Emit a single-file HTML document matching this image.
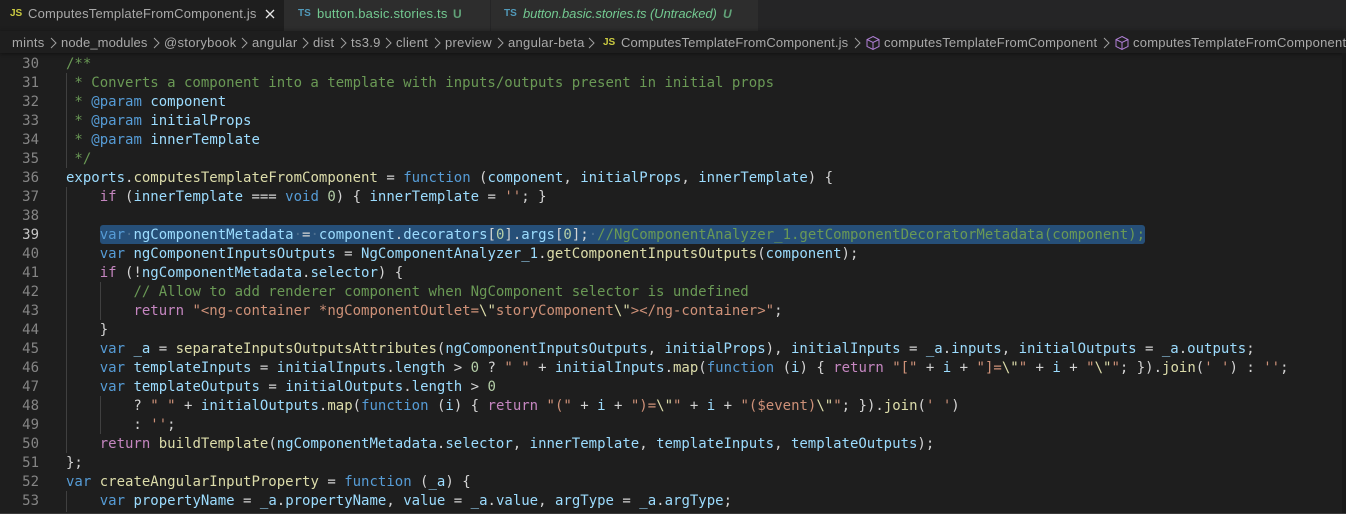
<!DOCTYPE html>
<html><head><meta charset="utf-8">
<style>
html,body{margin:0;padding:0;width:1346px;height:514px;overflow:hidden;background:#1e1e1e}
#root{position:relative;width:1346px;height:514px;overflow:hidden;background:#1e1e1e}
.abs{position:absolute;white-space:pre}
.ui{font-family:"Liberation Sans","DejaVu Sans",sans-serif;font-size:13px;line-height:18px}
.tab{position:absolute;top:0;height:31px;background:#2d2d2d}
.code{position:absolute;left:0;top:1px;width:1346px;font-family:"DejaVu Sans Mono",monospace;font-size:14px;line-height:19px;color:#d4d4d4;font-variant-ligatures:none}
.ln{position:absolute;left:0;width:39px;text-align:right;color:#858585;height:19px}
.l{position:absolute;left:66px;white-space:pre;height:19px}
.c{color:#6a9955}.k{color:#569cd6}.v{color:#9cdcfe}.f{color:#dcdcaa}.s{color:#ce9178}.r{color:#c586c0}.n{color:#4ec9b0}.d{color:#b5cea8}.y{color:#ffd700}
.g{position:absolute;width:1px;background:#404040}
.w{color:#4d6f8f}
.bc{color:#a9a9a9;top:34px}
</style></head><body><div id="root">

<div class="abs" style="left:0;top:0;width:1346px;height:31px;background:#252526"></div>
<div class="tab" style="left:0;width:284px;background:#1e1e1e"></div>
<div class="tab" style="left:284px;width:206px"></div>
<div class="tab" style="left:490px;width:268px;border-left:1px solid #252526;box-sizing:border-box"></div>

<div class="abs ui" style="left:10px;top:5px;font-size:10px;font-weight:bold;color:#cbcb41">JS</div>
<div class="abs ui" style="left:28px;top:5px;color:#a9a9a9;letter-spacing:.19px">ComputesTemplateFromComponent.js</div>
<svg class="abs" style="left:264px;top:7px" width="12" height="14" viewBox="0 0 12 14"><path d="M2 3l8 8M10 3l-8 8" stroke="#e8e8e8" stroke-width="1.3" fill="none"/></svg>

<div class="abs ui" style="left:298px;top:5px;font-size:10px;font-weight:bold;color:#519aba">TS</div>
<div class="abs ui" style="left:317px;top:5px;color:#73c991;letter-spacing:.21px">button.basic.stories.ts</div>
<div class="abs ui" style="left:453px;top:5px;color:#73c991;font-size:12px;font-weight:bold;opacity:.75">U</div>

<div class="abs ui" style="left:504px;top:5px;font-size:10px;font-weight:bold;color:#519aba">TS</div>
<div class="abs ui" style="left:523px;top:5px;color:#73c991;font-style:italic;letter-spacing:-.1px">button.basic.stories.ts (Untracked)</div>
<div class="abs ui" style="left:723px;top:5px;color:#73c991;font-size:12px;font-style:italic;font-weight:bold;opacity:.75">U</div>

<div class="abs" style="left:0;top:31px;width:1346px;height:22px;background:#1e1e1e;box-shadow:0 1px 4px #111"></div>

<div class="abs ui bc" style="left:12px;letter-spacing:.3px">mints</div>
<div class="abs ui bc" style="left:61px;letter-spacing:.1px">node_modules</div>
<div class="abs ui bc" style="left:164px;letter-spacing:.3px">@storybook</div>
<div class="abs ui bc" style="left:252px;letter-spacing:.3px">angular</div>
<div class="abs ui bc" style="left:313px;letter-spacing:.3px">dist</div>
<div class="abs ui bc" style="left:351px;letter-spacing:.3px">ts3.9</div>
<div class="abs ui bc" style="left:396px;letter-spacing:.3px">client</div>
<div class="abs ui bc" style="left:445px;letter-spacing:.3px">preview</div>
<div class="abs ui bc" style="left:508px;letter-spacing:.3px">angular-beta</div>
<div class="abs ui" style="left:603px;top:34px;font-size:10px;font-weight:bold;color:#cbcb41">JS</div>
<div class="abs ui bc" style="left:621px;letter-spacing:.15px">ComputesTemplateFromComponent.js</div>
<div class="abs ui bc" style="left:884px;letter-spacing:.23px">computesTemplateFromComponent</div>
<div class="abs ui bc" style="left:1133px;letter-spacing:.23px">computesTemplateFromComponent</div>

<svg class="abs" style="left:0;top:35px" width="1346" height="16" fill="none" stroke="#a0a0a0" stroke-width="1">
<path d="M51 3l5 5-5 5M154 3l5 5-5 5M242 3l5 5-5 5M303 3l5 5-5 5M341 3l5 5-5 5M386 3l5 5-5 5M435 3l5 5-5 5M498 3l5 5-5 5M589 3l5 5-5 5M855 3l5 5-5 5M1104 3l5 5-5 5"/>
<g stroke="#b180d7"><path d="M873 1.5l6 3v7l-6 3-6-3v-7zM867 4.5l6 3 6-3M873 7.5v7"/><path d="M1122 1.5l6 3v7l-6 3-6-3v-7zM1116 4.5l6 3 6-3M1122 7.5v7"/></g>
</svg>

<div class="abs" style="left:100px;top:225px;width:1045px;height:19px;background:#264f78;border-radius:3px"></div>

<div class="g" style="left:66px;top:73px;height:95px"></div>
<div class="g" style="left:66px;top:187px;height:266px"></div>
<div class="g" style="left:66px;top:491px;height:21px"></div>
<div class="g" style="left:100px;top:282px;height:38px"></div>
<div class="g" style="left:100px;top:396px;height:38px"></div>

<div class="code">
<div class="ln" style="top:54px">30</div><div class="l c" style="top:54px">/**</div>
<div class="ln" style="top:73px">31</div><div class="l c" style="top:73px"> * Converts a component into a template with inputs/outputs present in initial props</div>
<div class="ln" style="top:92px">32</div><div class="l c" style="top:92px"> * <span class="k">@param</span> <span class="v">component</span></div>
<div class="ln" style="top:111px">33</div><div class="l c" style="top:111px"> * <span class="k">@param</span> <span class="v">initialProps</span></div>
<div class="ln" style="top:130px">34</div><div class="l c" style="top:130px"> * <span class="k">@param</span> <span class="v">innerTemplate</span></div>
<div class="ln" style="top:149px">35</div><div class="l c" style="top:149px"> */</div>
<div class="ln" style="top:168px">36</div><div class="l" style="top:168px"><span class="v">exports</span>.<span class="f">computesTemplateFromComponent</span> = <span class="k">function</span> (<span class="v">component</span>, <span class="v">initialProps</span>, <span class="v">innerTemplate</span>) {</div>
<div class="ln" style="top:187px">37</div><div class="l" style="top:187px">    <span class="r">if</span> (<span class="v">innerTemplate</span> === <span class="k">void</span> <span class="d">0</span>) { <span class="v">innerTemplate</span> = <span class="s">''</span>; }</div>
<div class="ln" style="top:206px">38</div>
<div class="ln" style="top:225px;color:#c6c6c6">39</div><div class="l" style="top:225px">    <span class="k">var</span><span class="w">·</span><span class="v">ngComponentMetadata</span><span class="w">·</span>=<span class="w">·</span><span class="v">component</span>.<span class="v">decorators</span>[<span class="d">0</span>].<span class="v">args</span>[<span class="d">0</span>];<span class="w">·</span><span class="c">//NgComponentAnalyzer_1.getComponentDecoratorMetadata(component);</span></div>
<div class="ln" style="top:244px">40</div><div class="l" style="top:244px">    <span class="k">var</span> <span class="v">ngComponentInputsOutputs</span> = <span class="v">NgComponentAnalyzer_1</span>.<span class="f">getComponentInputsOutputs</span>(<span class="v">component</span>);</div>
<div class="ln" style="top:263px">41</div><div class="l" style="top:263px">    <span class="r">if</span> (!<span class="v">ngComponentMetadata</span>.<span class="v">selector</span>) {</div>
<div class="ln" style="top:282px">42</div><div class="l" style="top:282px">        <span class="c">// Allow to add renderer component when NgComponent selector is undefined</span></div>
<div class="ln" style="top:301px">43</div><div class="l" style="top:301px">        <span class="r">return</span> <span class="s">"&lt;ng-container *ngComponentOutlet=<span class="f">\"</span>storyComponent<span class="f">\"</span>&gt;&lt;/ng-container&gt;"</span>;</div>
<div class="ln" style="top:320px">44</div><div class="l" style="top:320px">    }</div>
<div class="ln" style="top:339px">45</div><div class="l" style="top:339px">    <span class="k">var</span> <span class="v">_a</span> = <span class="f">separateInputsOutputsAttributes</span>(<span class="v">ngComponentInputsOutputs</span>, <span class="v">initialProps</span>), <span class="v">initialInputs</span> = <span class="v">_a</span>.<span class="v">inputs</span>, <span class="v">initialOutputs</span> = <span class="v">_a</span>.<span class="v">outputs</span>;</div>
<div class="ln" style="top:358px">46</div><div class="l" style="top:358px">    <span class="k">var</span> <span class="v">templateInputs</span> = <span class="v">initialInputs</span>.<span class="v">length</span> &gt; <span class="d">0</span> ? <span class="s">" "</span> + <span class="v">initialInputs</span>.<span class="f">map</span>(<span class="k">function</span> (<span class="v">i</span>) { <span class="r">return</span> <span class="s">"["</span> + <span class="v">i</span> + <span class="s">"]=<span class="f">\"</span>"</span> + <span class="v">i</span> + <span class="s">"<span class="f">\"</span>"</span>; }).<span class="f">join</span>(<span class="s">' '</span>) : <span class="s">''</span>;</div>
<div class="ln" style="top:377px">47</div><div class="l" style="top:377px">    <span class="k">var</span> <span class="v">templateOutputs</span> = <span class="v">initialOutputs</span>.<span class="v">length</span> &gt; <span class="d">0</span></div>
<div class="ln" style="top:396px">48</div><div class="l" style="top:396px">        ? <span class="s">" "</span> + <span class="v">initialOutputs</span>.<span class="f">map</span>(<span class="k">function</span> (<span class="v">i</span>) { <span class="r">return</span> <span class="s">"("</span> + <span class="v">i</span> + <span class="s">")=<span class="f">\"</span>"</span> + <span class="v">i</span> + <span class="s">"($event)<span class="f">\"</span>"</span>; }).<span class="f">join</span>(<span class="s">' '</span>)</div>
<div class="ln" style="top:415px">49</div><div class="l" style="top:415px">        : <span class="s">''</span>;</div>
<div class="ln" style="top:434px">50</div><div class="l" style="top:434px">    <span class="r">return</span> <span class="f">buildTemplate</span>(<span class="v">ngComponentMetadata</span>.<span class="v">selector</span>, <span class="v">innerTemplate</span>, <span class="v">templateInputs</span>, <span class="v">templateOutputs</span>);</div>
<div class="ln" style="top:453px">51</div><div class="l" style="top:453px">};</div>
<div class="ln" style="top:472px">52</div><div class="l" style="top:472px"><span class="k">var</span> <span class="f">createAngularInputProperty</span> = <span class="k">function</span> (<span class="v">_a</span>) {</div>
<div class="ln" style="top:491px">53</div><div class="l" style="top:491px">    <span class="k">var</span> <span class="v">propertyName</span> = <span class="v">_a</span>.<span class="v">propertyName</span>, <span class="v">value</span> = <span class="v">_a</span>.<span class="v">value</span>, <span class="v">argType</span> = <span class="v">_a</span>.<span class="v">argType</span>;</div>
</div>

<div class="abs" style="left:1342px;top:53px;width:4px;height:460px;background:#191919"></div>
<div class="abs" style="left:0;top:513px;width:1346px;height:1px;background:#3a3a3a"></div>
</div></body></html>
